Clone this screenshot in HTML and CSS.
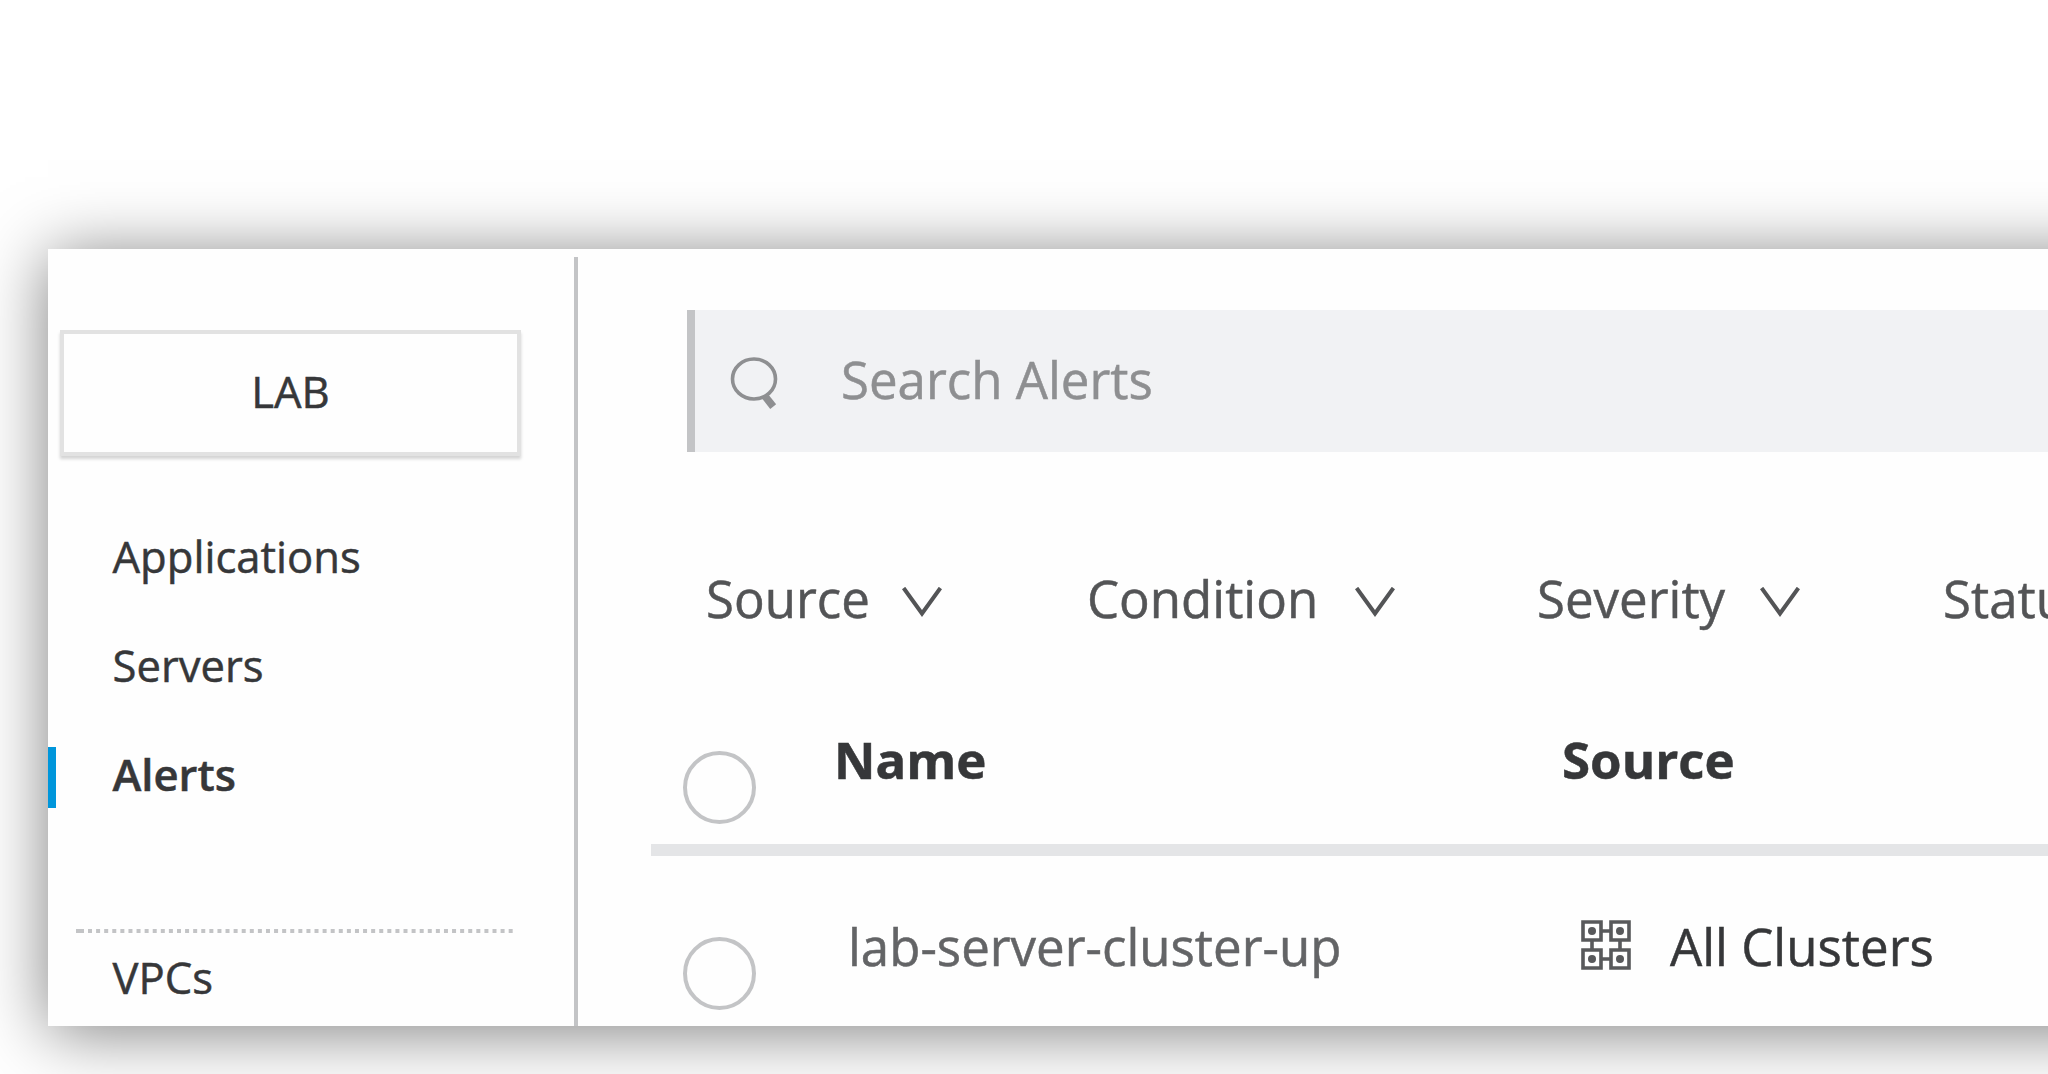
FILE: index.html
```html
<!DOCTYPE html>
<html lang="en">
<head>
<meta charset="utf-8">
<title>Alerts</title>
<link rel="stylesheet" href="styles.css">
</head>
<body>
<div class="window">
  <aside class="sidebar">
    <div class="env">LAB</div>
    <nav class="nav">
      <a class="nav-item">Applications</a>
      <a class="nav-item">Servers</a>
      <a class="nav-item active">Alerts</a>
    </nav>
    <svg class="dots" width="438" height="4" viewBox="0 0 438 4"><path d="M0 2h8" /><path d="M12 2h426" stroke-dasharray="4 4.09"/></svg>
    <a class="nav-item vpcs">VPCs</a>
  </aside>
  <main class="content">
    <div class="search">
      <svg class="search-icon" width="52" height="56" viewBox="0 0 52 56"><ellipse cx="26" cy="24" rx="21.5" ry="20" /><path class="handle" d="M37 41.2l8.2 10.4" /></svg>
      <span class="placeholder">Search Alerts</span>
    </div>
    <div class="filters">
      <div class="filter source">Source<svg class="chev" width="40" height="30" viewBox="0 0 40 30"><path d="M1.6 1L20 26.5L38.4 1"/></svg></div>
      <div class="filter condition">Condition<svg class="chev" width="40" height="30" viewBox="0 0 40 30"><path d="M1.6 1L20 26.5L38.4 1"/></svg></div>
      <div class="filter severity">Severity<svg class="chev" width="40" height="30" viewBox="0 0 40 30"><path d="M1.6 1L20 26.5L38.4 1"/></svg></div>
      <div class="filter status">Status</div>
    </div>
    <div class="table">
      <div class="row head">
        <span class="radio"></span>
        <span class="name">Name</span>
        <span class="src">Source</span>
      </div>
      <div class="row item">
        <span class="radio"></span>
        <span class="name">lab-server-cluster-up</span>
        <span class="src">
          <svg class="cluster" width="50" height="50" viewBox="0 0 50 50">
            <path d="M2 2h18v18H2zM30 2H48v18H30zM2 30h18V48H2zM30 30H48V48H30zM20 11h10M20 39h10M11 20v10M39 20v10"/>
            <circle cx="11" cy="11" r="4"/><circle cx="39" cy="11" r="4"/><circle cx="11" cy="39" r="4"/><circle cx="39" cy="39" r="4"/>
          </svg>All Clusters</span>
      </div>
    </div>
  </main>
</div>
</body>
</html>
```
FILE: styles.css
```css
* { box-sizing: border-box; }
html, body { margin: 0; height: 100%; overflow: hidden; background: #fff; }
body { font-family: "Open Sans", "Noto Sans", sans-serif; color: #363739; padding: 249px 0 0 48px; }
svg { display: block; flex: none; }
.window {
  display: flex;
  width: 2200px;
  height: 777px;
  background: #fefefe;
  box-shadow: 0 6px 64px rgba(0, 0, 0, .5);
  -webkit-text-stroke: .5px;
}
.sidebar {
  width: 530px;
  flex: none;
  margin-top: 8px;
  padding-top: 73px;
  border-right: 4px solid #c3c4c6;
  font-size: 43.6px;
}
.env {
  width: 461px;
  height: 126px;
  margin-left: 12px;
  border: 4px solid #e2e2e2;
  box-shadow: 0 3px 3px #d4d4d4;
  text-align: center;
  line-height: 114px;
}
.nav { padding-top: 46px; }
.nav-item {
  display: block;
  height: 109px;
  padding-left: 64.5px;
  line-height: 109px;
}
.active {
  font-weight: 600;
  background: linear-gradient(#0096db, #0096db) 0 27px / 8px 61px no-repeat;
}
.dots { margin: 100px 0 0 28px; stroke: #c3c4c6; stroke-width: 4; }
.vpcs { height: 92px; line-height: 88px; }
.content { flex: 1; min-width: 0; padding-top: 61px; font-size: 51px; }
.search {
  display: flex;
  height: 142px;
  margin-left: 109px;
  border-left: 8px solid #c3c4c6;
  background: #f1f2f4;
  color: #8e8f91;
  line-height: 138px;
}
.search-icon { margin: 45px 0 0 33px; fill: none; stroke: #8e8f91; stroke-width: 3.6; }
.handle { stroke-width: 7.5; }
.placeholder { margin-left: 61px; }
.filters {
  display: flex;
  height: 90px;
  margin-top: 100px;
  padding-left: 128px;
  color: #535456;
  line-height: 92px;
}
.filter { display: flex; justify-content: space-between; flex: none; }
.source { width: 236px; margin-right: 145px; }
.condition { width: 308px; margin-right: 142px; }
.severity { width: 263px; margin-right: 143px; }
.chev { margin-top: 35px; fill: none; stroke: #535456; stroke-width: 4; }
.table { margin: 77px 0 0 73px; }
.row { display: flex; }
.head { height: 137px; padding: 32px 0 0 32px; border-bottom: 12px solid #e4e5e7; font-weight: 700; line-height: 81px; }
.item { height: 170px; padding: 81px 0 0 32px; }
.radio { width: 73px; height: 73px; flex: none; border: 4px solid #c3c4c6; border-radius: 50%; }
.name { width: 728px; flex: none; margin-left: 78px; }
.head .name { margin-top: -32px; }
.head .src { margin-top: -32px; }
.item .name { width: 733px; margin-left: 92px; line-height: 18px; color: #636466; }
.item .src { display: flex; line-height: 18px; }
.cluster { margin: -17px 39px 0 0; fill: none; stroke: #58595b; stroke-width: 3.6; }
.cluster circle { fill: #58595b; stroke: none; }
```
